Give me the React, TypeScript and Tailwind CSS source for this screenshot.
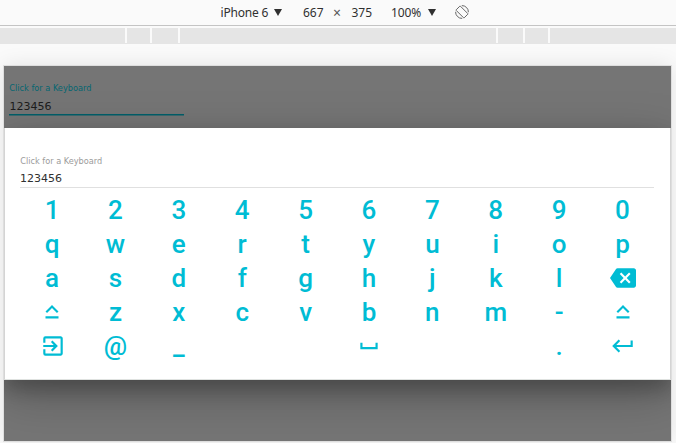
import type { ReactNode } from "react";
import { MdBackspace, MdExitToApp, MdKeyboardCapslock, MdKeyboardReturn, MdSpaceBar } from "react-icons/md";

const keys: ReactNode[] = [
  ..."1234567890qwertyuiopasdfghjkl".split(""),
  <MdBackspace />,
  <MdKeyboardCapslock />,
  ..."zxcvbnm-".split(""),
  <MdKeyboardCapslock />,
  <MdExitToApp className="-mt-px ml-px size-[26px]" />,
  <span className="-mt-0.5">@</span>,
  <span className="-mt-0.5">_</span>,
  "",
  "",
  <MdSpaceBar className="-mt-px ml-px size-[26px]" />,
  "",
  "",
  <span className="-mt-px">.</span>,
  <MdKeyboardReturn className="-mt-px size-[26px]" />,
];

function Caret() {
  return (
    <svg className="h-[7px] w-2 fill-[#303030]" viewBox="0 0 8 7">
      <path d="M0 0h8L4 7z" />
    </svg>
  );
}

function RotateIcon() {
  return (
    <svg className="size-[14px] fill-none stroke-[#666]" viewBox="0 0 14 14" strokeWidth="1">
      <path d="M4.8 1.2h.6l7.4 7.4v.6L9.2 12.8h-.6L1.2 5.4v-.6z" />
      <path d="M6.8.6A6.4 6.4 0 0 1 13.4 7.2M7.2 13.4A6.4 6.4 0 0 1 .6 6.8" />
    </svg>
  );
}

function Toolbar() {
  return (
    <div className="flex h-[26px] shrink-0 items-center border-b border-[#c4c4c4] pl-[220.5px] font-['Noto_Sans',sans-serif] text-[12px] leading-[25px] text-[#303030]">
      <span className="w-[53.5px] tracking-[-0.2px]">iPhone 6</span>
      <Caret />
      <span className="ml-[21px] w-[30px]">667</span>
      <span className="w-[18.5px] text-[14px] text-[#555]">×</span>
      <span className="w-[39.5px]">375</span>
      <span className="w-[37px] tracking-[-0.1px]">100%</span>
      <Caret />
      <span className="ml-[19px] -mt-px"><RotateIcon /></span>
    </div>
  );
}

function Ruler() {
  return (
    <div className="mt-[2px] flex h-4 shrink-0 border-b border-[#e5e5e5] bg-[#fafafa]">
      <div className="mr-[2px] w-[125px] bg-[#e5e5e5]" />
      <div className="mr-[2px] w-[23px] bg-[#e5e5e5]" />
      <div className="mr-[2px] w-[26px] bg-[#e5e5e5]" />
      <div className="mr-[2px] w-[316px] bg-[#e5e5e5]" />
      <div className="mr-[2px] w-[25px] bg-[#e5e5e5]" />
      <div className="mr-[2px] w-[23px] bg-[#e5e5e5]" />
      <div className="flex-1 bg-[#e5e5e5]" />
    </div>
  );
}

export default function App() {
  return (
    <div className="flex h-[443px] w-[676px] flex-col overflow-hidden bg-[#fafafa]">
      <Toolbar />
      <Ruler />
      <div className="mt-[22px] ml-1 h-[375px] w-[667px] shrink-0 bg-[#757575] shadow-[0_0_0_1px_#dedede,0_0_20px_rgba(0,0,0,0.1)]">
        <div className="flex h-full flex-col overflow-hidden font-['DejaVu_Sans',sans-serif]">
          <div className="h-[62px] shrink-0 pt-4 pl-[5px]">
            <div className="h-3 pl-[0.3px] text-[8.2px] leading-3 text-[#056671]">Click for a Keyboard</div>
            <div className="mt-1 h-[17px] w-[175px] border-b border-[#005e69] pl-[0.5px] text-[11px] leading-[17px] text-[#1c1c1c] shadow-[0_0.5px_0_#005e69]">123456</div>
          </div>
          <div className="h-[252px] shrink-0 border-x border-b border-x-[#d4d4d4] border-b-[#dfe2e0] bg-white px-[15px] shadow-[0_14px_45px_rgba(0,0,0,0.25),0_10px_18px_rgba(0,0,0,0.22)]">
            <div className="pt-[27px] pl-[0.2px] text-[8.2px] leading-3 text-[#9b9b9b]">Click for a Keyboard</div>
            <div className="mt-1 mr-px h-[17px] border-b border-[#e0e0e0] text-[11px] leading-[15px] text-[#303030]">123456</div>
            <div className="mt-[5px] mr-[0.8px] ml-[0.4px] grid auto-rows-[34.15px] grid-cols-10 font-[Roboto,sans-serif] text-[26px] leading-[34px] font-medium text-[#00bcd4]">
              {keys.map((key, i) => (
                <div key={i} className="flex items-center justify-center">{key}</div>
              ))}
            </div>
          </div>
        </div>
      </div>
    </div>
  );
}
